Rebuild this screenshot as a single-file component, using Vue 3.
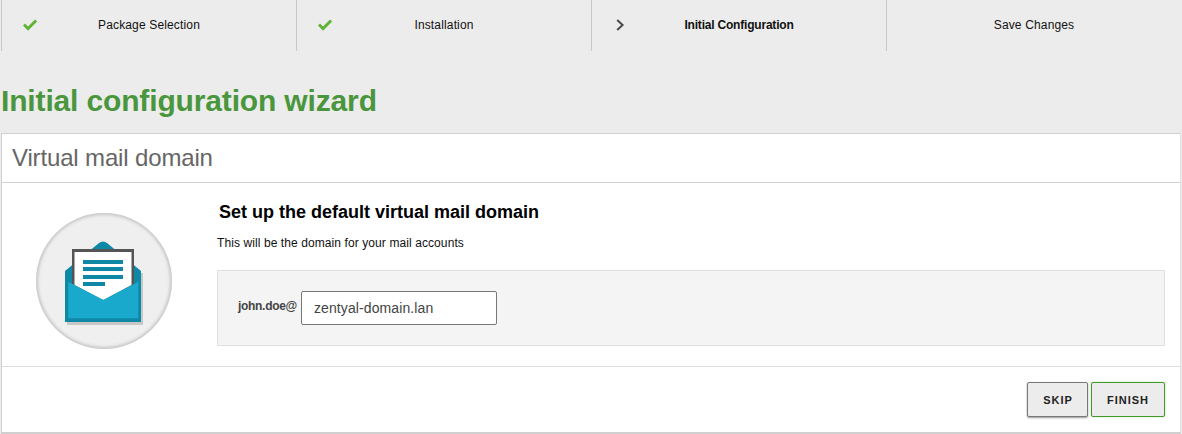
<script setup>
const steps = [
  { label: 'Package Selection', state: 'done' },
  { label: 'Installation', state: 'done' },
  { label: 'Initial Configuration', state: 'current' },
  { label: 'Save Changes', state: 'todo' },
]
</script>

<template>
  <div class="page">
    <ul class="steps">
      <li v-for="s in steps" :key="s.label" class="step" :class="{ current: s.state === 'current' }">
        <svg v-if="s.state === 'done'" class="step-icon" width="16" height="14" viewBox="0 0 16 14">
          <path d="M1 7.5 L3 5.6 L6 8.6 L13 1.5 L15.2 3.4 L6 12.8 Z" fill="#5fb336" />
        </svg>
        <svg v-else-if="s.state === 'current'" class="step-icon" width="16" height="14" viewBox="0 0 16 14">
          <path d="M5.2 2 L10.6 7 L5.2 12" fill="none" stroke="#4a4a4a" stroke-width="2" />
        </svg>
        <span class="step-label">{{ s.label }}</span>
      </li>
    </ul>

    <h1 class="title">Initial configuration wizard</h1>

    <section class="card">
      <h2 class="card-title">Virtual mail domain</h2>
      <div class="card-body">
        <div class="badge">
          <svg width="136" height="136" viewBox="0 0 136 136">
            <!-- shadow -->
            <path d="M100 60 L107 60 L107 112 L31 112 L31 108 L100 108 Z" fill="#c8c8c8" />
            <!-- back of envelope -->
            <path d="M29 58 L63 30 Q67 27 71 30 L105 58 L105 109 L29 109 Z" fill="#0f88a6" />
            <!-- letter -->
            <rect x="36" y="36" width="62" height="40" fill="#555" />
            <path d="M38.5 39 L95.5 39 L95.5 72 L67.3 87 L38.5 72 Z" fill="#fff" />
            <rect x="47" y="47" width="40" height="4" fill="#0f88a6" />
            <rect x="47" y="54" width="40" height="4" fill="#0f88a6" />
            <rect x="47" y="62" width="40" height="4" fill="#0f88a6" />
            <rect x="47" y="69" width="22" height="4" fill="#0f88a6" />
            <!-- front flap -->
            <path d="M32.3 68.7 L65 86 Q67.3 87.4 69.6 86 L102.3 68.7 L102.3 105.3 L32.3 105.3 Z" fill="#19a9cc" />
          </svg>
        </div>
        <div class="content">
          <h3 class="heading">Set up the default virtual mail domain</h3>
          <p class="desc">This will be the domain for your mail accounts</p>
          <div class="form-box">
            <label class="field-label" for="domain">john.doe@</label>
            <input id="domain" class="field" type="text" value="zentyal-domain.lan" />
          </div>
        </div>
      </div>
      <div class="card-footer">
        <button class="btn skip">SKIP</button>
        <button class="btn primary">FINISH</button>
      </div>
    </section>
  </div>
</template>

<style>
html, body {
  margin: 0;
  background: #ececec;
}
</style>

<style scoped>
.page {
  width: 1182px;
  height: 434px;
  overflow: hidden;
  font-family: "Liberation Sans", Arial, sans-serif;
  background: #ececec;
}

.steps {
  display: flex;
  list-style: none;
  margin: 0;
  padding: 0 0 0 1px;
  height: 51px;
}

.step {
  position: relative;
  width: 295px;
  box-sizing: border-box;
  border-left: 1px solid #c8c8c8;
  display: flex;
  align-items: center;
  justify-content: center;
  font-size: 12px;
  letter-spacing: 0.15px;
  color: #111;
}

.step-icon {
  position: absolute;
  left: 20px;
  top: 18px;
}

.step-label {
  position: relative;
  top: -1px;
}

.current {
  font-weight: bold;
  letter-spacing: -0.2px;
}

.title {
  margin: 31px 0 0 1px;
  height: 51px;
  font-size: 30px;
  line-height: 38px;
  letter-spacing: -0.15px;
  font-weight: bold;
  color: #4a963c;
}

.card {
  margin-left: 1px;
  width: 1180px;
  box-sizing: border-box;
  height: 301px;
  background: #fff;
  border: 1px solid #d0d0d0;
  border-bottom-width: 2px;
  border-right-color: #e0e0e0;
}

.card-title {
  margin: 0;
  height: 49px;
  box-sizing: border-box;
  padding-left: 10px;
  font-size: 24px;
  line-height: 47px;
  letter-spacing: -0.15px;
  font-weight: normal;
  color: #666;
  border-bottom: 1px solid #d0d0d0;
}

.card-body {
  display: flex;
  height: 184px;
  box-sizing: border-box;
  border-bottom: 1px solid #dcdcdc;
}

.badge {
  width: 136px;
  height: 136px;
  margin: 30px 0 0 34px;
  border-radius: 50%;
  background: #efefef;
  box-shadow: inset 0 0 3px 2px #c8c8c8;
}

.content {
  margin-left: 45px;
  width: 948px;
}

.heading {
  margin: 19px 0 0 2px;
  font-size: 18px;
  line-height: 20px;
  font-weight: bold;
  color: #000;
}

.desc {
  margin: 13px 0 0;
  font-size: 12px;
  line-height: 16px;
  letter-spacing: 0.09px;
  color: #111;
}

.form-box {
  margin-top: 19px;
  height: 76px;
  box-sizing: border-box;
  background: #f4f4f4;
  border: 1px solid #e0e0e0;
  display: flex;
  align-items: center;
  padding-left: 20px;
}

.field-label {
  width: 60px;
  margin-right: 3px;
  position: relative;
  top: -2px;
  font-size: 12px;
  font-weight: bold;
  letter-spacing: -0.3px;
  white-space: nowrap;
  color: #444;
}

.field {
  width: 196px;
  height: 34px;
  box-sizing: border-box;
  padding: 0 12px;
  border: 1px solid #777;
  border-radius: 2px;
  background: #fff;
  font-family: inherit;
  font-size: 14px;
  letter-spacing: 0.1px;
  color: #444;
}

.card-footer {
  display: flex;
  justify-content: flex-end;
  gap: 3px;
  padding: 15px 15px 0 0;
}

.btn {
  height: 35px;
  box-sizing: border-box;
  padding: 0 15px;
  background: #ececec;
  border: 1px solid #777;
  border-radius: 2px;
  box-shadow: 0 1px 2px rgba(0, 0, 0, 0.4);
  font-family: inherit;
  font-size: 11px;
  font-weight: bold;
  letter-spacing: 1px;
  color: #222;
}

.skip {
  padding-right: 14px;
}

.primary {
  border-color: #3f9a2a;
  box-shadow: 0 0 2px rgba(80, 170, 50, 0.4);
}
</style>
